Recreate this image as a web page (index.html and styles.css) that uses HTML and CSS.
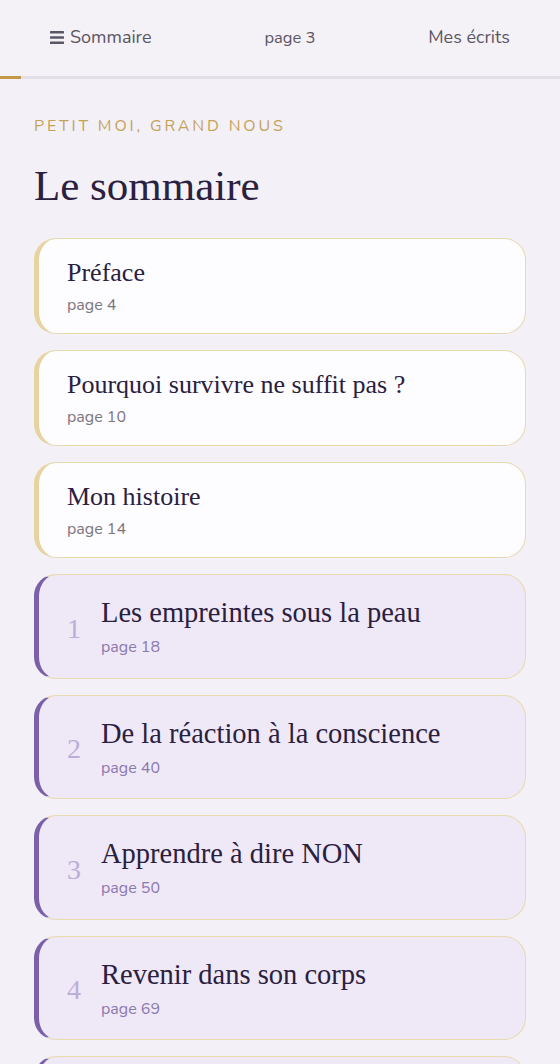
FILE: index.html
```html
<!DOCTYPE html>
<html lang="fr">
<head>
<meta charset="utf-8">
<title>Le sommaire</title>
<link rel="stylesheet" href="styles.css">
</head>
<body>
<header class="topbar">
  <a class="nav-link nav-left" href="#"><svg class="burger" width="14" height="13" viewBox="0 0 14 13"><rect x="0" y="0" width="14" height="2.6" rx="0.6"/><rect x="0" y="5.2" width="14" height="2.6" rx="0.6"/><rect x="0" y="10.4" width="14" height="2.6" rx="0.6"/></svg>Sommaire</a>
  <span class="page-indicator">page 3</span>
  <a class="nav-link nav-right" href="#">Mes écrits</a>
</header>
<div class="progress"><div class="progress-fill" style="width:21px"></div></div>
<main class="content">
  <p class="kicker">PETIT MOI, GRAND NOUS</p>
  <h1 class="title">Le sommaire</h1>
  <ul class="toc">
    <li class="card card-intro"><div class="card-body"><h2 class="card-title">Préface</h2><p class="card-page">page 4</p></div></li>
    <li class="card card-intro"><div class="card-body"><h2 class="card-title">Pourquoi survivre ne suffit pas ?</h2><p class="card-page">page 10</p></div></li>
    <li class="card card-intro"><div class="card-body"><h2 class="card-title">Mon histoire</h2><p class="card-page">page 14</p></div></li>
    <li class="card card-chapter"><span class="chap-num">1</span><div class="card-body"><h2 class="card-title">Les empreintes sous la peau</h2><p class="card-page">page 18</p></div></li>
    <li class="card card-chapter"><span class="chap-num">2</span><div class="card-body"><h2 class="card-title">De la réaction à la conscience</h2><p class="card-page">page 40</p></div></li>
    <li class="card card-chapter"><span class="chap-num">3</span><div class="card-body"><h2 class="card-title">Apprendre à dire NON</h2><p class="card-page">page 50</p></div></li>
    <li class="card card-chapter"><span class="chap-num">4</span><div class="card-body"><h2 class="card-title">Revenir dans son corps</h2><p class="card-page">page 69</p></div></li>
    <li class="card card-chapter card-next" aria-hidden="true"></li>
  </ul>
</main>
</body>
</html>
```

FILE: styles.css
```css
* { box-sizing: border-box; }
html, body { margin: 0; padding: 0; }
body {
  background: #f3f0f7;
  font-family: "Nunito", "Open Sans", "Noto Sans", sans-serif;
  color: #2a2040;
  overflow: hidden;
}
.topbar {
  height: 76px;
  display: flex;
  align-items: center;
  justify-content: space-between;
  padding: 0 50px 2px;
  background: #f4f1f7;
}
.nav-link {
  color: #5b5663;
  text-decoration: none;
  font-size: 18px;
  display: flex;
  align-items: center;
  gap: 6px;
}
.burger { fill: #5b5663; }
.page-indicator {
  color: #5b5663;
  font-size: 16.5px;
}
.progress {
  height: 3px;
  background: #e3dfe7;
}
.progress-fill {
  height: 3px;
  background: #c49a48;
}
.content {
  padding: 0 34px;
}
.kicker {
  margin: 39px 0 0;
  font-size: 16px;
  line-height: 16px;
  letter-spacing: 2.85px;
  color: #c6a257;
}
.title {
  margin: 27px 0 27px;
  font-family: "Liberation Serif", "DejaVu Serif", serif;
  font-weight: 400;
  font-size: 43px;
  line-height: 50px;
  color: #2a2040;
}
.toc {
  list-style: none;
  margin: 0;
  padding: 0;
  display: flex;
  flex-direction: column;
  gap: 16px;
}
.card {
  display: flex;
  align-items: center;
  border: 1px solid #e9d9ae;
  border-radius: 22px;
}
.card-intro {
  background: #fdfcfe;
  border-left: 5px solid #e6d3a0;
  padding: 17px 30px 17px 28px;
}
.card-chapter {
  background: #efe8f6;
  border-left: 5px solid #7b5fa9;
  padding: 20px 30px 19.5px 28px;
  gap: 20px;
}
.card-next {
  min-height: 104px;
}
.card-title {
  margin: 0;
  font-family: "Liberation Serif", "DejaVu Serif", serif;
  font-weight: 400;
  font-size: 26px;
  line-height: 33px;
  color: #2a2040;
}
.card-chapter .card-title {
  font-size: 28.5px;
  line-height: 36px;
}
.card-page {
  margin: 5px 0 0;
  font-size: 16px;
  line-height: 22px;
  color: #7a7680;
}
.card-chapter .card-page {
  color: #8a7aae;
}
.chap-num {
  font-family: "Liberation Serif", "DejaVu Serif", serif;
  font-size: 28px;
  line-height: 1;
  color: #bbaed8;
  margin-top: 4px;
}
```
